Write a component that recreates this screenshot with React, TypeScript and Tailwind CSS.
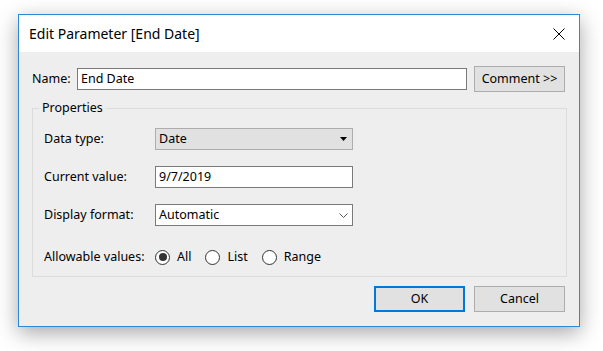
import React from "react";

const font = { fontFamily: '"Noto Sans", "Open Sans", sans-serif' };

function Radio({ checked, label }: { checked?: boolean; label: string }) {
  return (
    <div className="flex items-center gap-[7px]">
      <div className="w-[15px] h-[15px] rounded-full border border-[#333333] bg-white flex items-center justify-center">
        {checked && <div className="w-[8px] h-[8px] rounded-full bg-[#333333]" />}
      </div>
      <span>{label}</span>
    </div>
  );
}

export default function App() {
  return (
    <div className="w-[603px] h-[351px] bg-white pt-[14px] pl-[18px] text-[12.5px] text-black" style={font}>
      <div className="w-[562px] h-[313px] border border-[#2b89d8] bg-[#eeeeee] flex flex-col shadow-[0_6px_20px_rgba(0,0,0,0.35)]">
        {/* Title bar */}
        <div className="h-[37px] bg-white flex items-center justify-between pl-[10px] pr-[14px]">
          <span className="text-[14px] leading-none">Edit Parameter [End Date]</span>
          <svg width="12" height="12" viewBox="0 0 12 12">
            <path d="M0.5 0.5 L11.5 11.5 M11.5 0.5 L0.5 11.5" stroke="#000" strokeWidth="1" fill="none" />
          </svg>
        </div>
        {/* Content */}
        <div className="flex-1 flex flex-col pl-[13px] pr-[12px] pt-[14px]">
          <div className="h-[26px] flex items-center pr-[2px]">
            <span className="w-[45px]">Name:</span>
            <div className="w-[390px] h-[22px] border border-[#7a7a7a] bg-white px-[3px] flex items-center">End Date</div>
            <button className="ml-auto w-[91px] h-[26px] bg-[#e1e1e1] border border-[#adadad] flex items-center justify-center">
              Comment &gt;&gt;
            </button>
          </div>
          <fieldset className="mt-[8px] border border-[#dcdcdc] px-[11px] pt-[12px] pb-[8px]">
            <legend className="ml-[-5px] px-[3px] leading-[16px]">Properties</legend>
            <div className="flex flex-col">
              <div className="h-[22px] flex items-center">
                <span className="w-[111px]">Data type:</span>
                <div className="w-[198px] h-[22px] bg-[#e1e1e1] border border-[#adadad] px-[3px] flex items-center justify-between pr-[5px]">
                  <span>Date</span>
                  <svg width="7" height="4" viewBox="0 0 7 4">
                    <path d="M0 0 H7 L3.5 4 Z" fill="#000" />
                  </svg>
                </div>
              </div>
              <div className="h-[22px] mt-[16px] flex items-center">
                <span className="w-[111px]">Current value:</span>
                <div className="w-[198px] h-[22px] bg-white border border-[#7a7a7a] px-[3px] flex items-center">9/7/2019</div>
              </div>
              <div className="h-[22px] mt-[16px] flex items-center">
                <span className="w-[111px]">Display format:</span>
                <div className="w-[198px] h-[22px] bg-white border border-[#7a7a7a] px-[3px] flex items-center justify-between pr-[4px]">
                  <span>Automatic</span>
                  <svg width="9" height="5" viewBox="0 0 9 5">
                    <path d="M0.5 0.5 L4.5 4.5 L8.5 0.5" stroke="#555" strokeWidth="1" fill="none" />
                  </svg>
                </div>
              </div>
              <div className="h-[22px] mt-[20px] flex items-center">
                <span className="w-[111px]">Allowable values:</span>
                <div className="flex items-center gap-[14px]">
                  <Radio checked label="All" />
                  <Radio label="List" />
                  <Radio label="Range" />
                </div>
              </div>
            </div>
          </fieldset>
          <div className="mt-[9px] flex justify-end gap-[9px] pr-[2px]">
            <button className="w-[91px] h-[26px] bg-[#e1e1e1] border-2 border-[#0078d7] flex items-center justify-center">OK</button>
            <button className="w-[91px] h-[26px] bg-[#e1e1e1] border border-[#adadad] flex items-center justify-center">Cancel</button>
          </div>
        </div>
      </div>
    </div>
  );
}
